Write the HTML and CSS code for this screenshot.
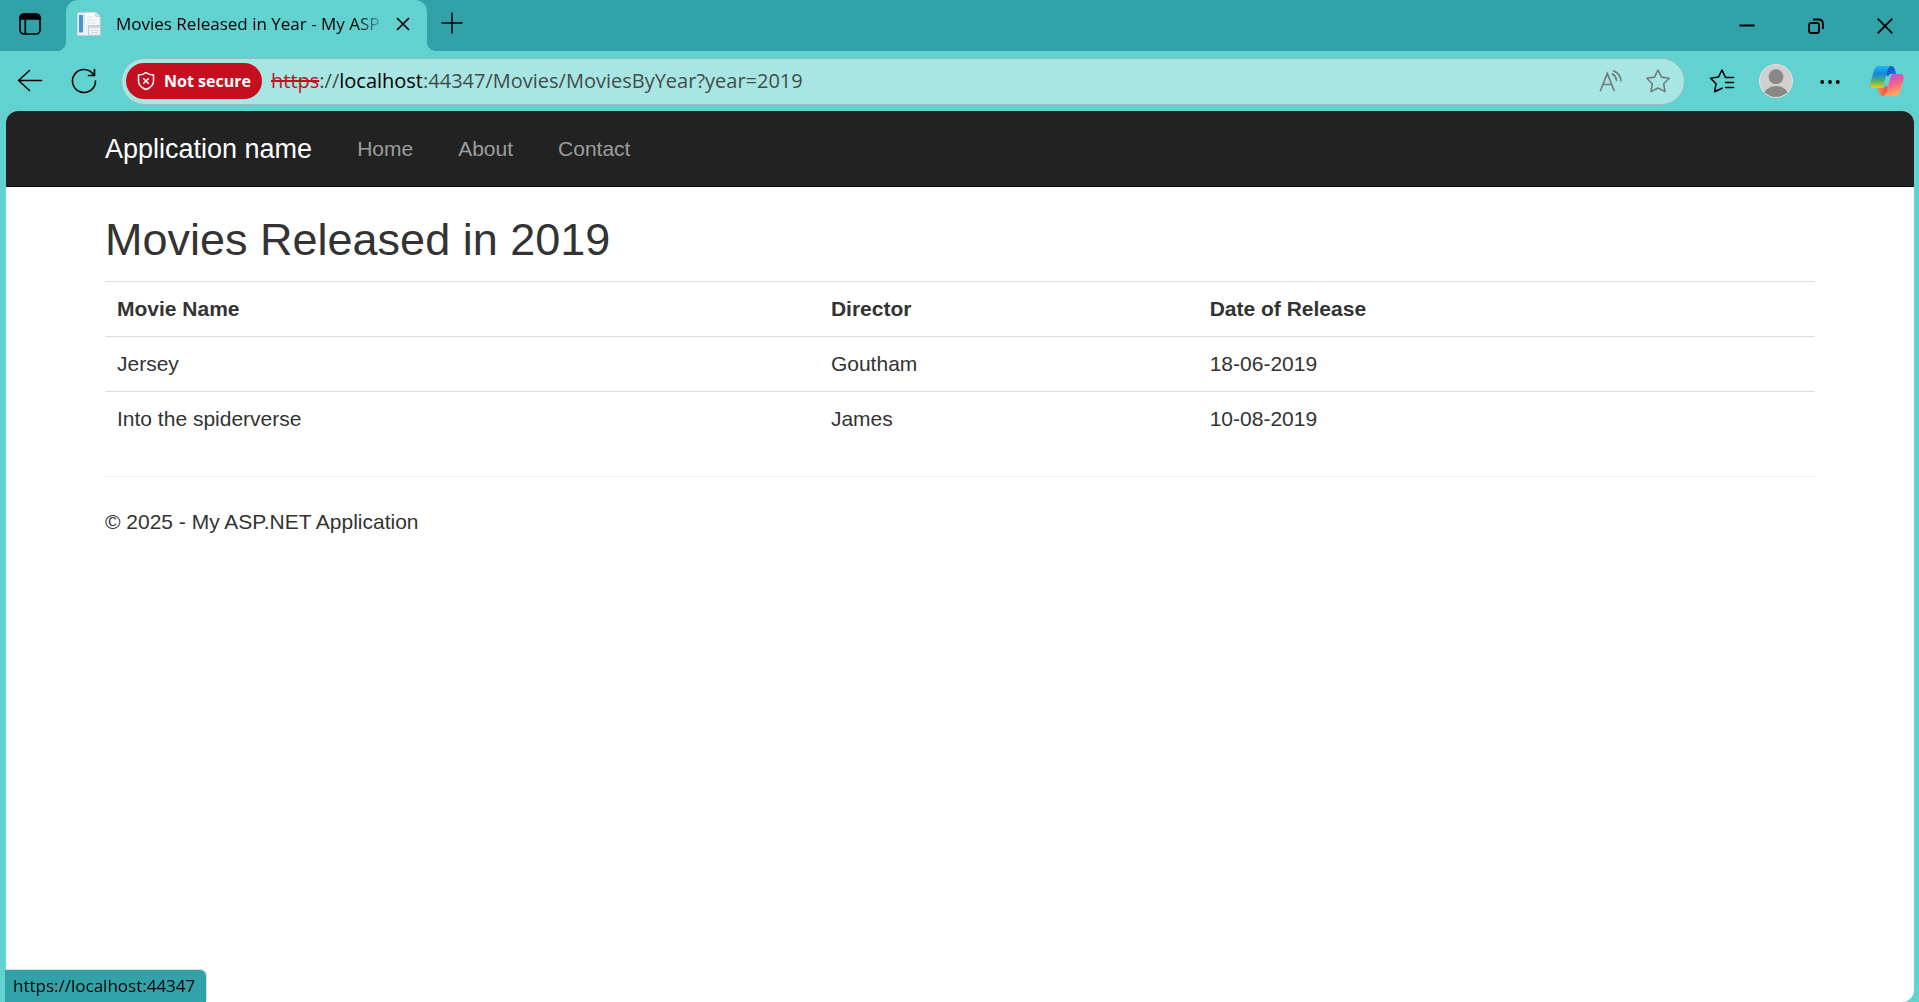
FILE: index.html
```html
<!DOCTYPE html>
<html lang="en">
<head>
<meta charset="utf-8">
<meta name="viewport" content="width=device-width, initial-scale=1">
<title>Movies Released in Year - My ASP.NET Application</title>
<link rel="stylesheet" href="styles.css">
</head>
<body>
<header class="tab-strip">
  <button class="icon-btn" aria-label="Tab actions">
    <svg width="24" height="24" viewBox="0 0 24 24" fill="none" stroke="#000" stroke-width="1.7"><rect x="2" y="2.500" width="20" height="19.500" rx="4"/><path d="M2 7V6q0-4 4-4h12q4 0 4 4v1z" fill="#000"/><path d="M7.300 8v14"/></svg>
  </button>
  <div class="tab">
    <svg class="favicon" width="24" height="24" viewBox="0 0 24 24"><path d="M.5.800h15.500v22.400H.5z" fill="#eef3f7" stroke="#cdd8e0"/><path d="M2 3h4v17.500H2z" fill="#4a93d0"/><path d="M7.500.500h11l4.500 4v10.500H7.500z" fill="#f8fafb" stroke="#d5dde2"/><path d="M18.500.500v4H23" fill="#dde5ea" stroke="#cbd4da"/><path d="M10 5h6M10 8h10M10 11h9" stroke="#d9e1e7"/><path d="M7.500 12h5v11h-5z" fill="#eef2f5"/><path d="M11.500 13.500h12v9.700h-12z" fill="#eef1f3" stroke="#bfcbd3"/><path d="M12 14h11v2H12z" fill="#cad8e2"/><path d="M14.500 18.500h6v2h-6z" fill="#fff" stroke="#d0d8de"/></svg>
    <span class="tab-title">Movies Released in Year - My ASP</span>
    <button class="tab-close" aria-label="Close tab">
      <svg width="14" height="14" viewBox="0 0 14 14" fill="none" stroke="#000" stroke-width="1.700"><path d="M1 1l12 12M13 1L1 13"/></svg>
    </button>
  </div>
  <button class="new-tab" aria-label="New tab">
    <svg width="22" height="22" viewBox="0 0 22 22" fill="none" stroke="#000" stroke-width="1.500"><path d="M11 .500v21M.500 11h21"/></svg>
  </button>
  <div class="window-controls">
    <button aria-label="Minimize"><svg width="16" height="16" viewBox="0 0 16 16" fill="none" stroke="#000" stroke-width="2"><path d="M.500 7.500h15"/></svg></button>
    <button aria-label="Restore"><svg width="16" height="16" viewBox="0 0 16 16" fill="none" stroke="#000" stroke-width="1.800"><rect x="1" y="5" width="10" height="10" rx="2"/><path d="M5 1.500h5.500q4.500 0 4.500 4.500V11"/></svg></button>
    <button aria-label="Close"><svg width="16" height="16" viewBox="0 0 16 16" fill="none" stroke="#000" stroke-width="1.800"><path d="M.700.700l14.600 14.600M15.300.700L.700 15.300"/></svg></button>
  </div>
</header>

<div class="toolbar">
  <button class="icon-btn" aria-label="Back"><svg width="26" height="24" viewBox="0 0 26 24" fill="none" stroke="#000" stroke-width="1.500" stroke-linecap="round" stroke-linejoin="round"><path d="M24.500 11.500H1.500M12.500 1.500L1.500 11.500 12.500 21.500"/></svg></button>
  <button class="icon-btn" aria-label="Refresh"><svg width="26" height="26" viewBox="0 0 26 26" fill="none" stroke="#000" stroke-width="1.600" stroke-linecap="round"><path d="M24.500 13A11.500 11.500 0 1 1 22.500 6.500"/><path d="M23.500 1.500v6H17.500"/></svg></button>
  <div class="address-bar">
    <button class="security">
      <svg width="18" height="20" viewBox="0 0 18 20" fill="none" stroke="#fff" stroke-width="1.500" stroke-linejoin="round"><path d="M9 1.500Q12 4 16.500 4v6q0 5.700-7.500 8.500Q1.500 15.700 1.500 10V4Q6 4 9 1.500z"/><path d="M6.200 7.200l5.600 5.600M11.800 7.200l-5.600 5.600"/></svg>
      Not secure
    </button>
    <div class="url" role="textbox" aria-label="Address" contenteditable="true" spellcheck="false"><span class="scheme">https</span>://<span class="host">localhost</span>:44347/Movies/MoviesByYear?year=2019</div>
    <button class="inner-btn" aria-label="Read aloud"><svg width="24" height="24" viewBox="0 0 24 24" fill="none" stroke="#6f7d7d" stroke-width="1.700" stroke-linecap="round"><path d="M2.500 21.500L9.300 4.500l6.800 17M5 15.500h8.600"/><path d="M14.500 5q3.500 2 4 6.300"/><path d="M15.500 1.800q7 3 7.500 10"/></svg></button>
    <button class="inner-btn" aria-label="Add to favorites"><svg width="26" height="26" viewBox="0 0 26 26" fill="none" stroke="#6f7d7d" stroke-width="1.600" stroke-linejoin="round"><path d="M13 2l3.500 7.100 7.700 1.200-5.500 5.500 1.300 7.800-7-3.600-7 3.600 1.300-7.800-5.500-5.500 7.700-1.200z"/></svg></button>
  </div>
  <button class="icon-btn" aria-label="Favorites"><svg width="26" height="26" viewBox="0 0 26 26" fill="none" stroke="#000" stroke-width="1.600" stroke-linejoin="round" stroke-linecap="round"><path d="M24.500 9.500H16.500L13 2 9.500 9 1.500 10.200l5.500 5.600L5.700 23.700l7.300-3.500"/><path d="M16.500 14.500h8M16.500 19.500h8"/></svg></button>
  <button class="icon-btn" aria-label="Profile"><svg width="34" height="34" viewBox="0 0 34 34"><defs><clipPath id="face"><circle cx="17" cy="17" r="16"/></clipPath></defs><circle cx="17" cy="17" r="16.500" fill="#d2d0ce" stroke="#e4e2e0"/><circle cx="17" cy="12.700" r="7.400" fill="#8a8886"/><ellipse cx="17" cy="32" rx="12.500" ry="10" fill="#8a8886" clip-path="url(#face)"/></svg></button>
  <button class="icon-btn" aria-label="Settings and more"><svg width="20" height="6" viewBox="0 0 20 6"><circle cx="2.200" cy="4" r="1.900"/><circle cx="10" cy="4" r="1.900"/><circle cx="17.800" cy="4" r="1.900"/></svg></button>
  <button class="icon-btn copilot" aria-label="Copilot">
    <svg width="34" height="32" viewBox="0 0 34 32">
      <defs>
        <linearGradient id="c1" x1="0" y1="0" x2="0" y2="1"><stop offset="0" stop-color="#22b4f5"/><stop offset=".35" stop-color="#1089df"/><stop offset=".68" stop-color="#51b06b"/><stop offset="1" stop-color="#fbc908"/></linearGradient>
        <linearGradient id="c2" x1="0" y1="0" x2=".3" y2="1"><stop offset="0" stop-color="#ab50ee"/><stop offset=".5" stop-color="#f05c93"/><stop offset="1" stop-color="#ffa958"/></linearGradient>
        <linearGradient id="c3" x1="0" y1="0" x2="1" y2="1"><stop offset="0" stop-color="#123fbd"/><stop offset="1" stop-color="#297ce8"/></linearGradient>
        <linearGradient id="c4" x1="0" y1="0" x2="1" y2="0"><stop offset="0" stop-color="#ff8a4a"/><stop offset="1" stop-color="#e8433d"/></linearGradient>
      </defs>
      <path d="M20 1h1.500q2.500 0 3.200 2.700l1.600 5.300h-5q-2.600 0-3.400 2.800L15 8z" fill="url(#c3)"/>
      <path d="M14 31h-1.500q-2.500 0-3.200-2.700L7.700 23h5q2.600 0 3.400-2.800L19 24z" fill="url(#c4)"/>
      <path d="M8.500 1H21q-2 0-3 3l-4.500 15.500Q12.500 23 9.500 23H4Q-.800 23 .700 17L4 5.500Q5.200 1 8.500 1z" fill="url(#c1)"/>
      <path d="M25.500 31H13q2 0 3-3l4.500-15.500Q21.500 9 24.500 9H30q4.800 0 3.300 6L30 26.500Q28.800 31 25.500 31z" fill="url(#c2)"/>
    </svg>
  </button>
</div>

<div class="viewport">
  <nav class="navbar">
    <div class="container nav-row">
      <a class="brand" href="#">Application name</a>
      <a class="nav-link" href="#">Home</a>
      <a class="nav-link" href="#">About</a>
      <a class="nav-link" href="#">Contact</a>
    </div>
  </nav>
  <main class="container">
    <h2>Movies Released in 2019</h2>
    <table>
      <colgroup><col class="col-name"><col class="col-director"><col></colgroup>
      <thead><tr><th>Movie Name</th><th>Director</th><th>Date of Release</th></tr></thead>
      <tbody>
        <tr><td>Jersey</td><td>Goutham</td><td>18-06-2019</td></tr>
        <tr><td>Into the spiderverse</td><td>James</td><td>10-08-2019</td></tr>
      </tbody>
    </table>
    <hr>
    <footer><p>© 2025 - My ASP.NET Application</p></footer>
  </main>
</div>
<div class="status">https://localhost:44347</div>
</body>
</html>
```
FILE: styles.css
```css
* { box-sizing: border-box; }

body {
  margin: 0;
  min-height: 100vh;
  display: flex;
  flex-direction: column;
  background: #62d2d1;
  font-family: "Open Sans", "Noto Sans", sans-serif;
  color: #000;
}

button {
  display: flex;
  align-items: center;
  justify-content: center;
  flex: none;
  padding: 0;
  border: 0;
  background: none;
  font: inherit;
  color: inherit;
}

svg { display: block; flex: none; }

/* Tab strip */
.tab-strip {
  display: flex;
  height: 51px;
  padding-left: 3px;
  background: #31a3a8;
}

.icon-btn { width: 54px; height: 48px; }

.tab {
  position: relative;
  display: flex;
  align-items: center;
  width: 361px;
  margin-left: 9px;
  padding: 0 9px 3px 11px;
  border-radius: 12px 12px 0 0;
  background: #62d2d1;
}

.tab::before,
.tab::after {
  content: "";
  position: absolute;
  bottom: 0;
  width: 9px;
  height: 9px;
}

.tab::before {
  left: -9px;
  background: radial-gradient(circle at 0 0, transparent 9px, #62d2d1 9px);
}

.tab::after {
  right: -9px;
  background: radial-gradient(circle at 100% 0, transparent 9px, #62d2d1 9px);
}

.tab-title {
  flex: 1;
  min-width: 0;
  margin: 0 2px 0 15px;
  overflow: hidden;
  white-space: nowrap;
  font-size: 17px;
  line-height: 24px;
  -webkit-mask-image: linear-gradient(to left, transparent, #000 30px);
  mask-image: linear-gradient(to left, transparent, #000 30px);
}

.tab-close { width: 30px; height: 30px; }
.new-tab { width: 42px; height: 46px; margin-left: 4px; }

.window-controls { display: flex; margin-left: auto; }
.window-controls button { width: 69px; height: 51px; }

/* Toolbar */
.toolbar {
  display: flex;
  align-items: center;
  height: 60px;
  padding: 0 2px 0 3px;
}

.copilot { width: 60px; }

.address-bar {
  display: flex;
  align-items: center;
  flex: 1;
  min-width: 0;
  height: 47px;
  margin: 0 10px;
  padding: 0 2px 0 4px;
  border: 1px solid #8dbfbf;
  border-radius: 24px;
  background: #a8e6e4;
}

.security {
  gap: 9px;
  width: 136px;
  height: 36px;
  border-radius: 18px;
  background: #c50f1f;
  color: #fff;
  font-size: 16px;
  font-weight: 700;
}

.url {
  flex: 1;
  min-width: 0;
  margin-left: 9px;
  overflow: hidden;
  white-space: nowrap;
  font-size: 20px;
  line-height: 30px;
  color: #444b4b;
}

.scheme { color: #c50f1f; text-decoration: line-through; }
.host { color: #000; }
.inner-btn { width: 48px; height: 40px; }

/* Page */
.viewport {
  flex: 1;
  margin: 0 5px 0 6px;
  border-radius: 12px;
  overflow: hidden;
  background: #fff;
  font-family: "Liberation Sans", Arial, sans-serif;
  font-size: 21px;
  line-height: 30px;
  color: #333;
}

.container {
  width: 100%;
  max-width: 1754px;
  margin: 0 auto;
  padding: 0 22px;
}

.navbar {
  background: #222;
  border-bottom: 1px solid #080808;
}

.nav-row {
  display: flex;
  align-items: center;
  gap: 1px;
  height: 75px;
}

.nav-row a { text-decoration: none; }
.brand { padding-right: 22px; font-size: 27px; color: #fff; }
.nav-link { padding: 0 22px; color: #9d9d9d; }

h2 {
  margin: 28px 0 16px;
  font-size: 45px;
  line-height: 50px;
  font-weight: 400;
}

table {
  width: 100%;
  margin-bottom: 30px;
  border-collapse: separate;
  border-spacing: 0;
  table-layout: fixed;
}

.col-name { width: 41.75%; }
.col-director { width: 22.15%; }

th, td {
  padding: 12px;
  border-top: 1px solid #ddd;
  text-align: left;
}

hr {
  margin: 30px 0;
  border: 0;
  border-top: 1px solid #eee;
}

footer p { margin: 0 0 15px; }

.status {
  position: fixed;
  left: 5px;
  bottom: 0;
  height: 32px;
  padding: 0 11px 0 8px;
  border-radius: 0 6px 0 0;
  box-shadow: 1px -1px 0 0 #ddd;
  background: #31a3a8;
  font-size: 17px;
  line-height: 32px;
}
```
